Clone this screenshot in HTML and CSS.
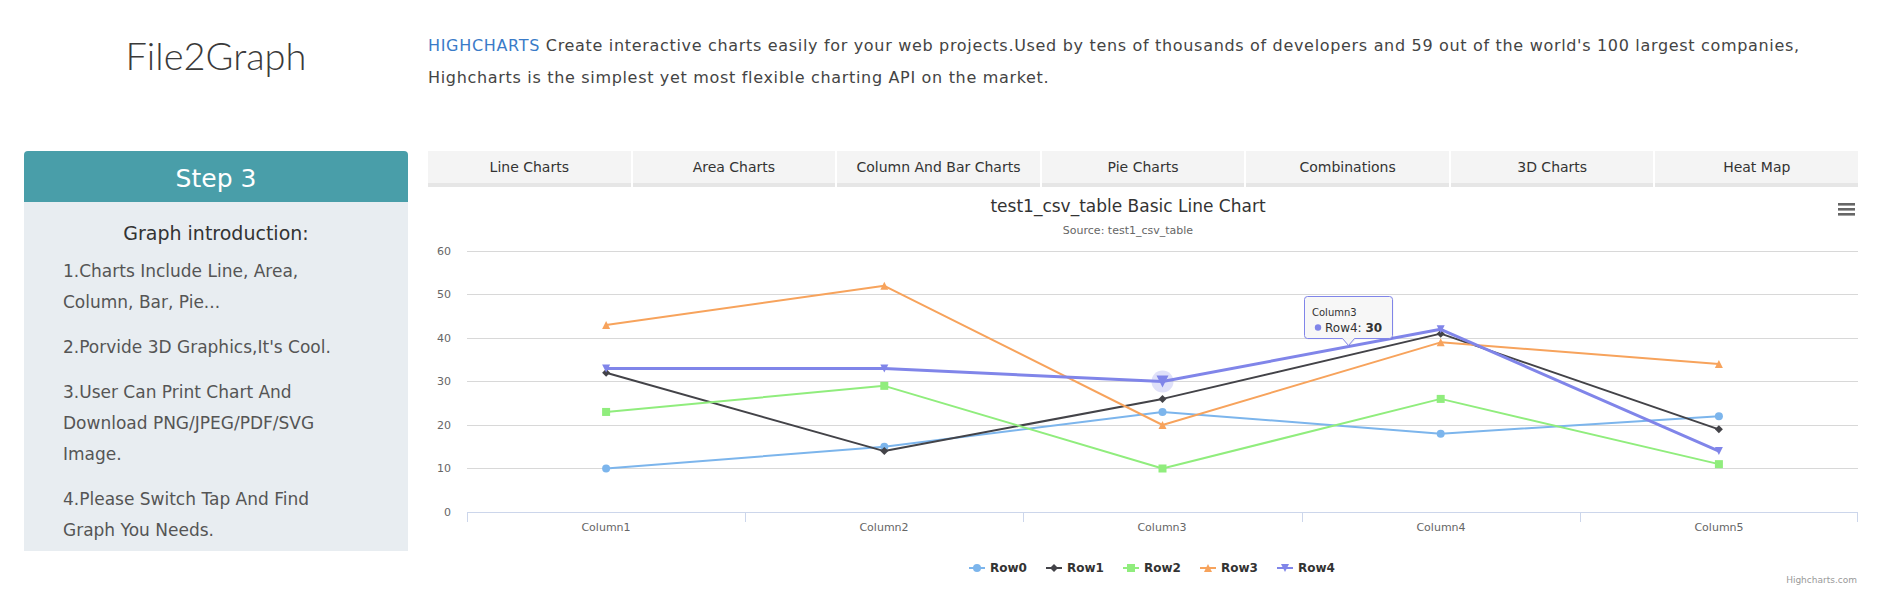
FILE: index.html
```html
<!DOCTYPE html>
<html lang="en">
<head>
<meta charset="utf-8">
<title>File2Graph</title>
<link rel="stylesheet" href="styles.css">
</head>
<body>
<header class="top">
  <div class="brand"><div class="logo">File2Graph</div></div>
  <p class="intro"><a href="#">HIGHCHARTS</a> Create interactive charts easily for your web projects.Used by tens of thousands of developers and 59 out of the world's 100 largest companies, Highcharts is the simplest yet most flexible charting API on the market.</p>
</header>
<div class="row">
  <aside class="side">
    <div class="side-head">Step 3</div>
    <div class="side-body">
      <h3>Graph introduction:</h3>
      <p>1.Charts Include Line, Area, Column, Bar, Pie...</p>
      <p>2.Porvide 3D Graphics,It's Cool.</p>
      <p>3.User Can Print Chart And Download PNG/JPEG/PDF/SVG Image.</p>
      <p>4.Please Switch Tap And Find Graph You Needs.</p>
    </div>
  </aside>
  <main class="main">
    <nav class="tabs">
      <div class="tab">Line Charts</div>
      <div class="tab">Area Charts</div>
      <div class="tab">Column And Bar Charts</div>
      <div class="tab">Pie Charts</div>
      <div class="tab">Combinations</div>
      <div class="tab">3D Charts</div>
      <div class="tab">Heat Map</div>
    </nav>
    <svg class="chart" width="1430" height="400" viewBox="0 0 1430 400" xmlns="http://www.w3.org/2000/svg">
      <text class="c-title" x="700" y="25" text-anchor="middle">test1_csv_table Basic Line Chart</text>
      <text class="c-sub" x="700" y="47" text-anchor="middle">Source: test1_csv_table</text>
      <g class="menu" fill="#666">
        <rect x="1410" y="16" width="17" height="2.6"/>
        <rect x="1410" y="21" width="17" height="2.6"/>
        <rect x="1410" y="26" width="17" height="2.6"/>
      </g>
      <g stroke="#d8d8d8" stroke-width="1">
        <line x1="39" x2="1430" y1="64.5" y2="64.5"/>
        <line x1="39" x2="1430" y1="107.5" y2="107.5"/>
        <line x1="39" x2="1430" y1="151.5" y2="151.5"/>
        <line x1="39" x2="1430" y1="194.5" y2="194.5"/>
        <line x1="39" x2="1430" y1="238.5" y2="238.5"/>
        <line x1="39" x2="1430" y1="281.5" y2="281.5"/>
      </g>
      <g stroke="#ccd6eb" stroke-width="1">
        <line x1="39" x2="1430" y1="325.5" y2="325.5"/>
        <line x1="39.5" x2="39.5" y1="325" y2="335"/>
        <line x1="317.5" x2="317.5" y1="325" y2="335"/>
        <line x1="595.5" x2="595.5" y1="325" y2="335"/>
        <line x1="874.5" x2="874.5" y1="325" y2="335"/>
        <line x1="1152.5" x2="1152.5" y1="325" y2="335"/>
        <line x1="1429.5" x2="1429.5" y1="325" y2="335"/>
      </g>
      <g class="ylab" text-anchor="end">
        <text x="23" y="68">60</text>
        <text x="23" y="111">50</text>
        <text x="23" y="155">40</text>
        <text x="23" y="198">30</text>
        <text x="23" y="242">20</text>
        <text x="23" y="285">10</text>
        <text x="23" y="329">0</text>
      </g>
      <g class="xlab" text-anchor="middle">
        <text x="178" y="344">Column1</text>
        <text x="456" y="344">Column2</text>
        <text x="734" y="344">Column3</text>
        <text x="1013" y="344">Column4</text>
        <text x="1291" y="344">Column5</text>
      </g>
      <!-- Row0 -->
      <g fill="#7cb5ec">
        <polyline points="178.1,281.5 456.3,259.75 734.5,224.95 1012.7,246.7 1290.9,229.3" fill="none" stroke="#7cb5ec" stroke-width="2" stroke-linejoin="round"/>
        <circle cx="178.1" cy="281.5" r="4"/>
        <circle cx="456.3" cy="259.75" r="4"/>
        <circle cx="734.5" cy="224.95" r="4"/>
        <circle cx="1012.7" cy="246.7" r="4"/>
        <circle cx="1290.9" cy="229.3" r="4"/>
      </g>
      <!-- Row1 -->
      <g fill="#434348">
        <polyline points="178.1,185.8 456.3,264.1 734.5,211.9 1012.7,146.65 1290.9,242.35" fill="none" stroke="#434348" stroke-width="2" stroke-linejoin="round"/>
        <polygon points="178.1,181.8 182.1,185.8 178.1,189.8 174.1,185.8"/>
        <polygon points="456.3,260.1 460.3,264.1 456.3,268.1 452.3,264.1"/>
        <polygon points="734.5,207.9 738.5,211.9 734.5,215.9 730.5,211.9"/>
        <polygon points="1012.7,142.65 1016.7,146.65 1012.7,150.65 1008.7,146.65"/>
        <polygon points="1290.9,238.35 1294.9,242.35 1290.9,246.35 1286.9,242.35"/>
      </g>
      <!-- Row2 -->
      <g fill="#90ed7d">
        <polyline points="178.1,224.95 456.3,198.85 734.5,281.5 1012.7,211.9 1290.9,277.15" fill="none" stroke="#90ed7d" stroke-width="2" stroke-linejoin="round"/>
        <rect x="174.1" y="220.95" width="8" height="8"/>
        <rect x="452.3" y="194.85" width="8" height="8"/>
        <rect x="730.5" y="277.5" width="8" height="8"/>
        <rect x="1008.7" y="207.9" width="8" height="8"/>
        <rect x="1286.9" y="273.15" width="8" height="8"/>
      </g>
      <!-- Row3 -->
      <g fill="#f7a35c">
        <polyline points="178.1,137.95 456.3,98.8 734.5,238 1012.7,155.35 1290.9,177.1" fill="none" stroke="#f7a35c" stroke-width="2" stroke-linejoin="round"/>
        <polygon points="178.1,133.95 182.1,141.95 174.1,141.95"/>
        <polygon points="456.3,94.8 460.3,102.8 452.3,102.8"/>
        <polygon points="734.5,234 738.5,242 730.5,242"/>
        <polygon points="1012.7,151.35 1016.7,159.35 1008.7,159.35"/>
        <polygon points="1290.9,173.1 1294.9,181.1 1286.9,181.1"/>
      </g>
      <!-- Row4 (hovered) -->
      <circle cx="734.5" cy="194.5" r="11" fill="#8085e9" fill-opacity="0.25"/>
      <g fill="#8085e9">
        <polyline points="178.1,181.45 456.3,181.45 734.5,194.5 1012.7,142.3 1290.9,264.1" fill="none" stroke="#8085e9" stroke-width="3" stroke-linejoin="round"/>
        <polygon points="174.1,177.45 182.1,177.45 178.1,185.45"/>
        <polygon points="452.3,177.45 460.3,177.45 456.3,185.45"/>
        <polygon points="728.5,188.5 740.5,188.5 734.5,200.5"/>
        <polygon points="1008.7,138.3 1016.7,138.3 1012.7,146.3"/>
        <polygon points="1286.9,260.1 1294.9,260.1 1290.9,268.1"/>
      </g>
      <!-- Tooltip -->
      <g class="tip">
        <path d="M879.5,109.5 L961.5,109.5 Q964.5,109.5 964.5,112.5 L964.5,148.5 Q964.5,151.5 961.5,151.5 L926.5,151.5 L920.5,158.5 L914.5,151.5 L879.5,151.5 Q876.5,151.5 876.5,148.5 L876.5,112.5 Q876.5,109.5 879.5,109.5 Z" fill="#000" fill-opacity="0.06" transform="translate(1,1)"/>
        <path d="M879.5,109.5 L961.5,109.5 Q964.5,109.5 964.5,112.5 L964.5,148.5 Q964.5,151.5 961.5,151.5 L926.5,151.5 L920.5,158.5 L914.5,151.5 L879.5,151.5 Q876.5,151.5 876.5,148.5 L876.5,112.5 Q876.5,109.5 879.5,109.5 Z" fill="#f7f7f7" fill-opacity="0.9" stroke="#8085e9" stroke-width="1"/>
        <text class="tip-h" x="884" y="129">Column3</text>
        <circle cx="890" cy="140.5" r="3.2" fill="#8085e9"/>
        <text class="tip-b" x="897" y="145">Row4: <tspan font-weight="bold">30</tspan></text>
      </g>
      <!-- Legend -->
      <g class="legend">
        <line x1="541" x2="557" y1="381" y2="381" stroke="#7cb5ec" stroke-width="2"/>
        <circle cx="549" cy="381" r="4" fill="#7cb5ec"/>
        <text x="562" y="385">Row0</text>
        <line x1="618" x2="634" y1="381" y2="381" stroke="#434348" stroke-width="2"/>
        <polygon points="626,377 630,381 626,385 622,381" fill="#434348"/>
        <text x="639" y="385">Row1</text>
        <line x1="695" x2="711" y1="381" y2="381" stroke="#90ed7d" stroke-width="2"/>
        <rect x="699" y="377" width="8" height="8" fill="#90ed7d"/>
        <text x="716" y="385">Row2</text>
        <line x1="772" x2="788" y1="381" y2="381" stroke="#f7a35c" stroke-width="2"/>
        <polygon points="780,377 784,385 776,385" fill="#f7a35c"/>
        <text x="793" y="385">Row3</text>
        <line x1="849" x2="865" y1="381" y2="381" stroke="#8085e9" stroke-width="2"/>
        <polygon points="853,377 861,377 857,385" fill="#8085e9"/>
        <text x="870" y="385">Row4</text>
      </g>
      <text class="credits" x="1429" y="396" text-anchor="end">Highcharts.com</text>
    </svg>
  </main>
</div>
</body>
</html>
```
FILE: styles.css
```css
* { box-sizing: border-box; }

body {
  margin: 0;
  width: 1888px;
  font-family: "DejaVu Sans", Verdana, sans-serif;
  color: #333;
  background: #fff;
}

.top {
  display: flex;
  align-items: flex-start;
  height: 151px;
  padding-top: 30px;
}

.brand {
  width: 384px;
  margin-left: 24px;
  text-align: center;
}

.logo {
  display: inline-block;
  margin-top: 6px;
  font-family: "Lato", "Open Sans", sans-serif;
  font-weight: 300;
  font-size: 38px;
  line-height: 38px;
  color: #3a3a3a;
}

.intro {
  width: 1430px;
  margin: 0 0 0 20px;
  font-size: 16px;
  letter-spacing: 0.68px;
  line-height: 32px;
  color: #444;
}

.intro a {
  color: #3a7bc8;
  text-decoration: none;
}

.row {
  display: flex;
  align-items: flex-start;
}

.side {
  width: 384px;
  margin-left: 24px;
}

.side-head {
  height: 51px;
  padding-top: 4px;
  background: #499ea9;
  color: #fff;
  border-radius: 4px 4px 0 0;
  text-align: center;
  font-size: 25px;
  line-height: 47px;
}

.side-body {
  height: 349px;
  padding: 17px 39px 5px;
  background: #e8edf1;
}

.side-body h3 {
  margin: 0;
  font-size: 19px;
  font-weight: normal;
  line-height: 28px;
  text-align: center;
  color: #333;
}

.side-body p {
  margin: 14px 0 0;
  padding-right: 16px;
  font-size: 17px;
  line-height: 31px;
  color: #555;
}

.side-body h3 + p {
  margin-top: 9px;
}

.main {
  width: 1430px;
  margin-left: 20px;
}

.tabs {
  display: flex;
  gap: 2px;
}

.tab {
  flex: 1;
  height: 36px;
  background: #f4f4f4;
  border-bottom: 4px solid #e6e6e6;
  text-align: center;
  font-size: 14px;
  line-height: 32px;
  color: #333;
}

.chart {
  display: block;
  overflow: visible;
  font-family: "DejaVu Sans", Verdana, sans-serif;
}

.c-title {
  font-size: 17px;
  fill: #333;
}

.c-sub {
  font-size: 11px;
  fill: #666;
}

.ylab text,
.xlab text {
  font-size: 11px;
  fill: #666;
}

.tip-h {
  font-size: 10px;
  fill: #333;
}

.tip-b {
  font-size: 12px;
  fill: #333;
}

.legend text {
  font-size: 12px;
  font-weight: bold;
  fill: #333;
}

.credits {
  font-size: 9px;
  fill: #999;
}
```
